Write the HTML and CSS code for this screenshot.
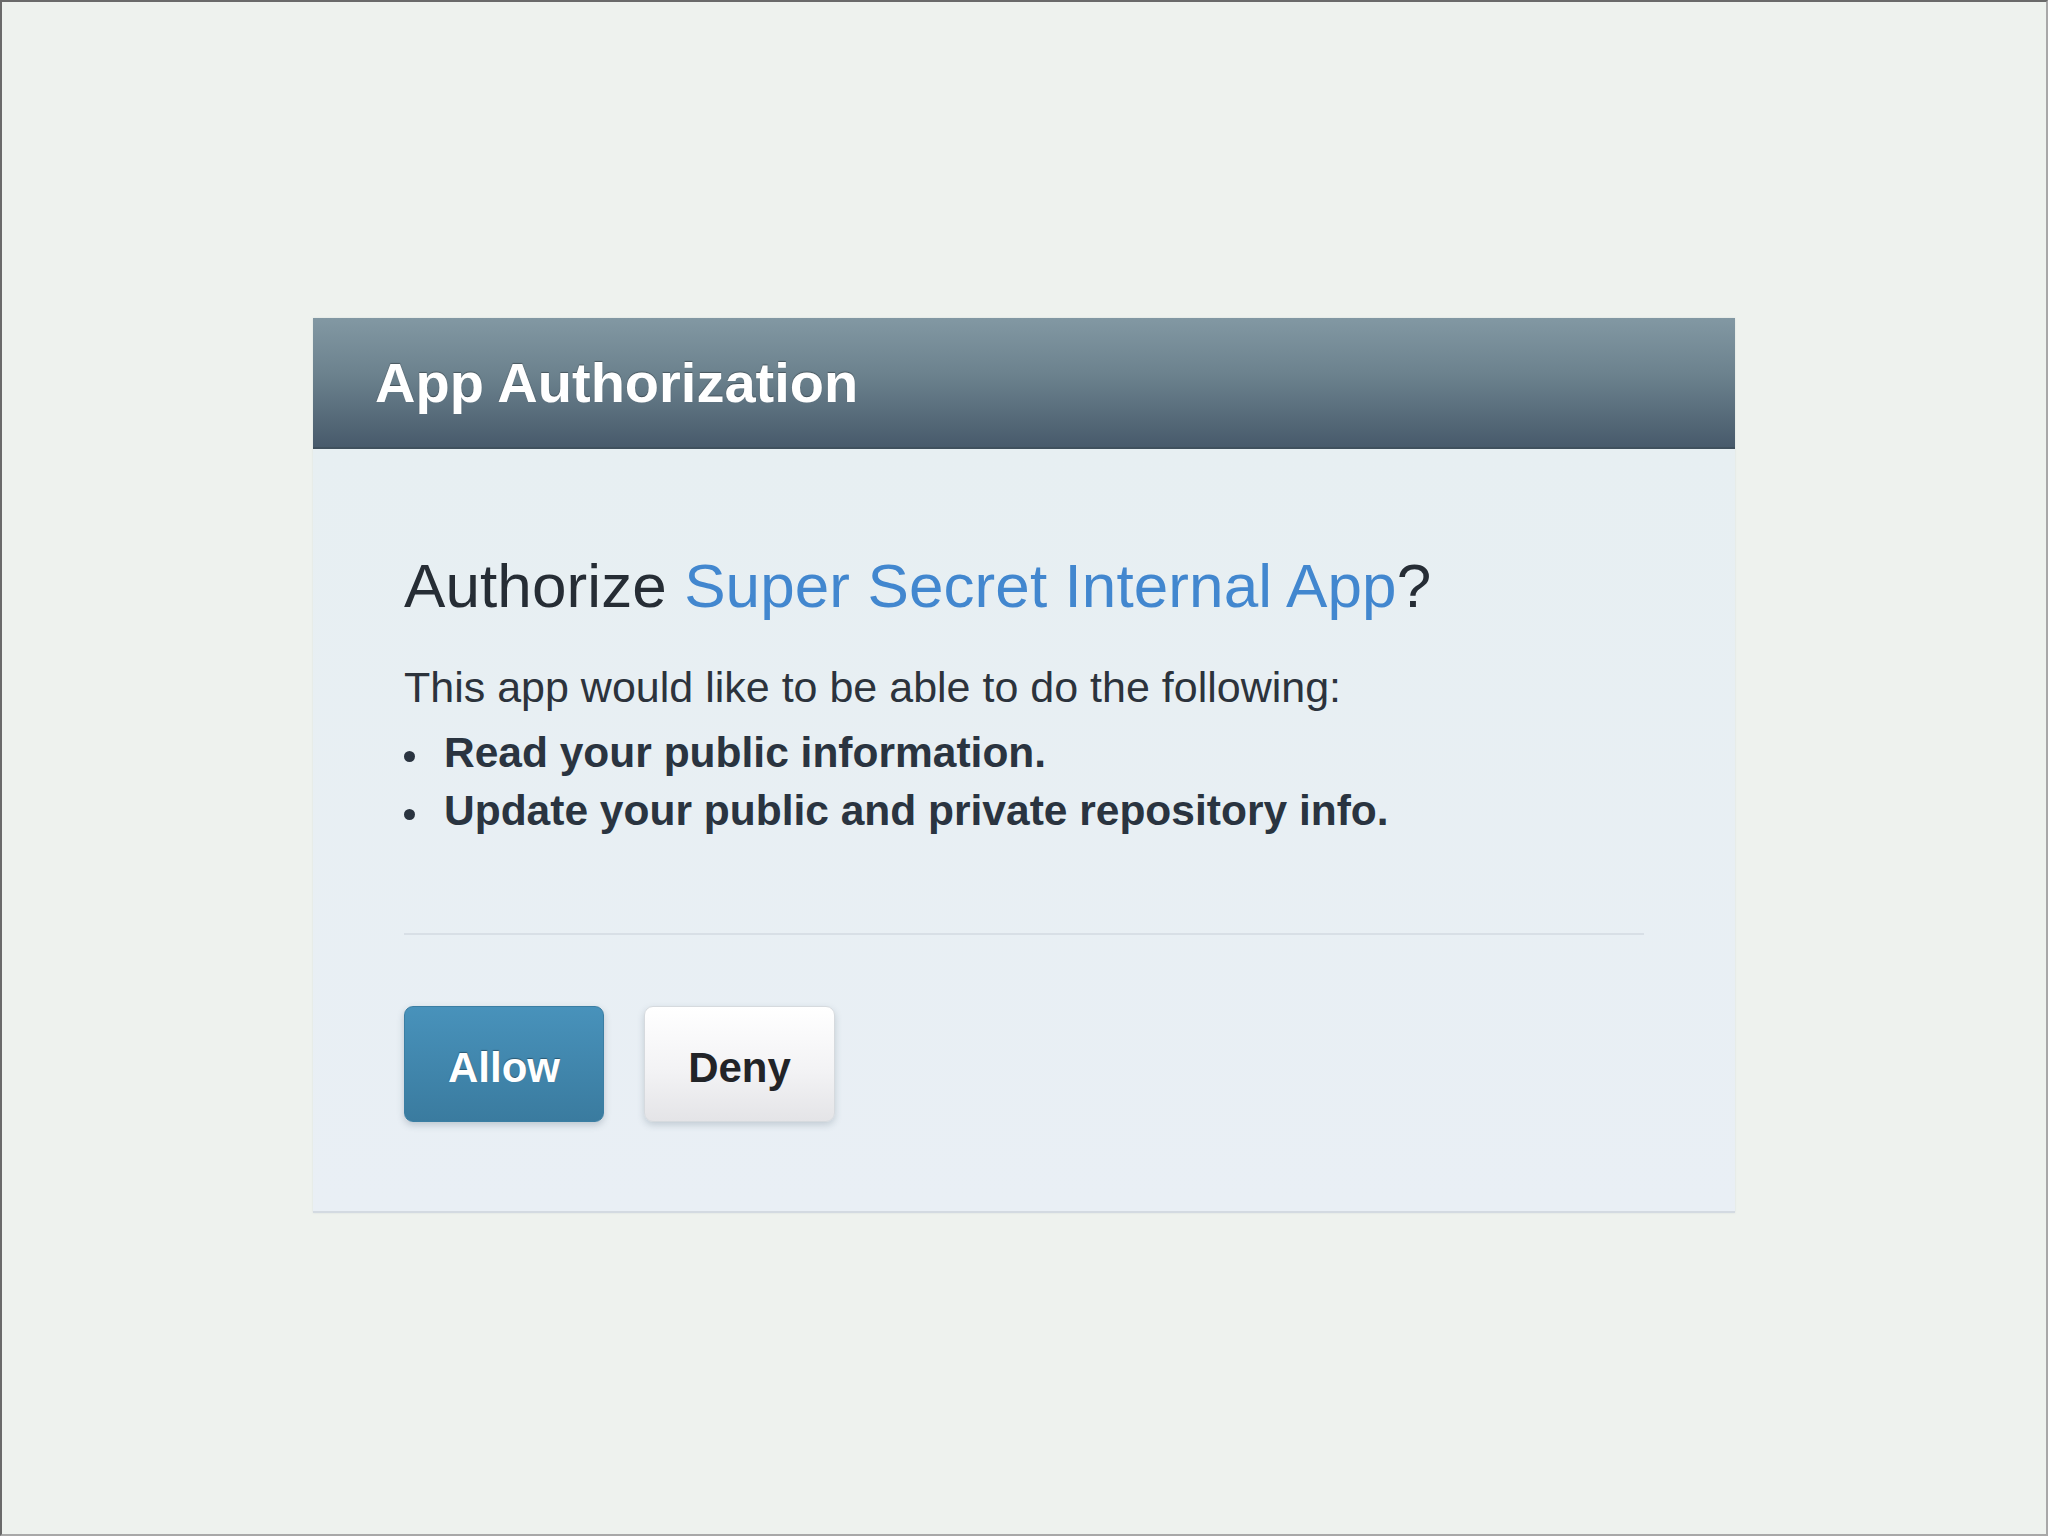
FILE: index.html
```html
<!DOCTYPE html>
<html lang="en">
<head>
<meta charset="utf-8">
<title>App Authorization</title>
<link rel="stylesheet" href="styles.css">
</head>
<body>
  <div class="card">
    <div class="card-header">
      <h1 class="card-title">App Authorization</h1>
    </div>
    <div class="card-body">
      <h2 class="question">Authorize <a class="app-link" href="#">Super Secret Internal App</a>?</h2>
      <p class="intro">This app would like to be able to do the following:</p>
      <ul class="perms">
        <li class="perm">Read your public information.</li>
        <li class="perm">Update your public and private repository info.</li>
      </ul>
      <div class="divider"></div>
      <div class="actions">
        <button class="btn btn-allow" type="button">Allow</button>
        <button class="btn btn-deny" type="button">Deny</button>
      </div>
    </div>
  </div>
</body>
</html>
```

FILE: styles.css
```css
html, body {
  margin: 0;
  padding: 0;
}

body {
  box-sizing: border-box;
  width: 2048px;
  height: 1536px;
  background: #eef2ee;
  border-top: 2px solid #6a6a6a;
  border-left: 2px solid #6a6a6a;
  border-right: 2px solid #a8a8a8;
  border-bottom: 2px solid #a8a8a8;
  padding: 316px 0 0 311px;
  font-family: "Liberation Sans", Arial, Helvetica, sans-serif;
}

.card {
  width: 1422px;
  box-shadow: 0 0 2px rgba(120, 130, 140, 0.15);
}

.card-header {
  height: 129px;
  border-bottom: 2px solid #3f505d;
  background: linear-gradient(to bottom, #8298a3 0%, #6b818d 45%, #475a6b 100%);
}

.card-title {
  margin: 0;
  padding-left: 62px;
  font-size: 56px;
  line-height: 129px;
  font-weight: bold;
  color: #ffffff;
  letter-spacing: 0;
  text-shadow: 0 -1px 1px rgba(0, 0, 0, 0.35);
}

.card-body {
  background: linear-gradient(to bottom, #e7eff2 0%, #e9eff5 100%);
  padding: 101px 91px 89px;
  border-bottom: 2px solid #d3dae1;
  color: #2b323b;
}

.question {
  margin: 0 0 38px;
  font-size: 62px;
  line-height: 72px;
  font-weight: normal;
  letter-spacing: 0.1px;
  color: #262d35;
}

.app-link {
  color: #4287cf;
  text-decoration: none;
}

.intro {
  margin: 0 0 9px;
  font-size: 43px;
  line-height: 55px;
  color: #2c333c;
}

.perms {
  list-style: none;
  margin: 0;
  padding: 0 0 0 40px;
}

.perm {
  font-size: 42.5px;
  line-height: 58px;
  font-weight: bold;
  color: #2a3440;
}

.perm::before {
  content: "";
  display: inline-block;
  width: 11px;
  height: 11px;
  border-radius: 50%;
  background: #2a3440;
  margin-left: -40px;
  margin-right: 29px;
  vertical-align: 5px;
}

.divider {
  height: 2px;
  background: #d8dfe6;
  margin: 93px 0 71px;
}

.actions {
  display: flex;
  gap: 40px;
}

.btn {
  box-sizing: border-box;
  height: 116px;
  padding: 7px 0 0;
  border-radius: 9px;
  font-family: "Liberation Sans", Arial, Helvetica, sans-serif;
  font-size: 42px;
  font-weight: bold;
  line-height: 107px;
  text-align: center;
  cursor: pointer;
}

.btn-allow {
  width: 200px;
  color: #ffffff;
  border: 1px solid #3b7ea3;
  background: linear-gradient(to bottom, #4892bb 0%, #3a7b9f 100%);
  text-shadow: 0 -1px 1px rgba(0, 0, 0, 0.35);
  box-shadow: 0 3px 7px rgba(60, 80, 100, 0.25);
}

.btn-deny {
  width: 191px;
  color: #222428;
  border: 1px solid #d6dade;
  background: linear-gradient(to bottom, #ffffff 0%, #f3f3f5 55%, #e4e4e7 100%);
  box-shadow: 0 3px 7px rgba(60, 80, 100, 0.22);
}
```
